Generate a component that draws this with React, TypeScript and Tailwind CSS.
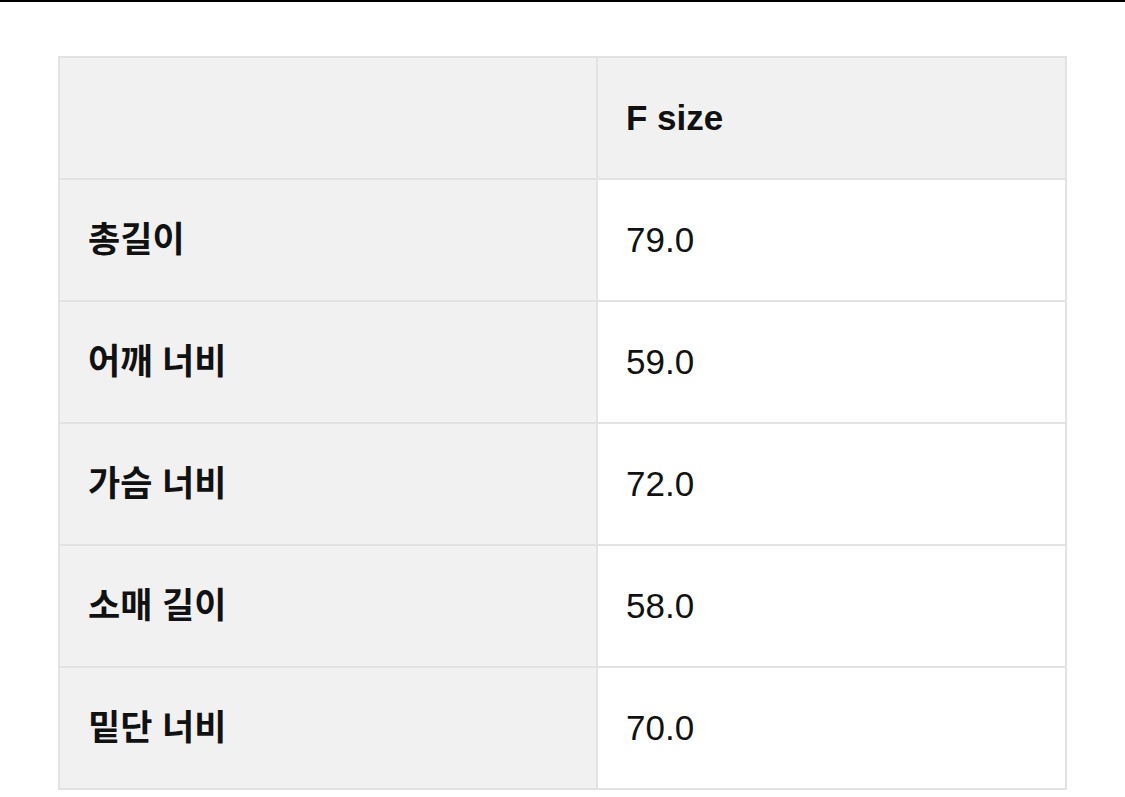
const ROWS = [
  { label: '총길이', value: '79.0' },
  { label: '어깨 너비', value: '59.0' },
  { label: '가슴 너비', value: '72.0' },
  { label: '소매 길이', value: '58.0' },
  { label: '밑단 너비', value: '70.0' },
];

export default function App() {
  return (
    <div
      className="min-h-[797px] bg-white border-t-2 border-black pt-[54px] pl-[58px]"
      style={{ fontFamily: '"Liberation Sans", "Noto Sans CJK KR", sans-serif' }}
    >
      <table className="border-collapse text-[35px] text-[#111]">
        <thead>
          <tr className="bg-[#f1f1f1]">
            <th className="w-[538px] h-[122px] border-2 border-[#e2e2e2] p-0" />
            <th className="w-[469px] h-[122px] border-2 border-[#e2e2e2] pl-[28px] text-left font-bold">
              F size
            </th>
          </tr>
        </thead>
        <tbody>
          {ROWS.map((r) => (
            <tr key={r.label}>
              <td className="h-[122px] bg-[#f1f1f1] border-2 border-[#e2e2e2] pl-[28px] font-bold">
                {r.label}
              </td>
              <td className="h-[122px] bg-white border-2 border-[#e2e2e2] pl-[28px]">{r.value}</td>
            </tr>
          ))}
        </tbody>
      </table>
    </div>
  );
}
